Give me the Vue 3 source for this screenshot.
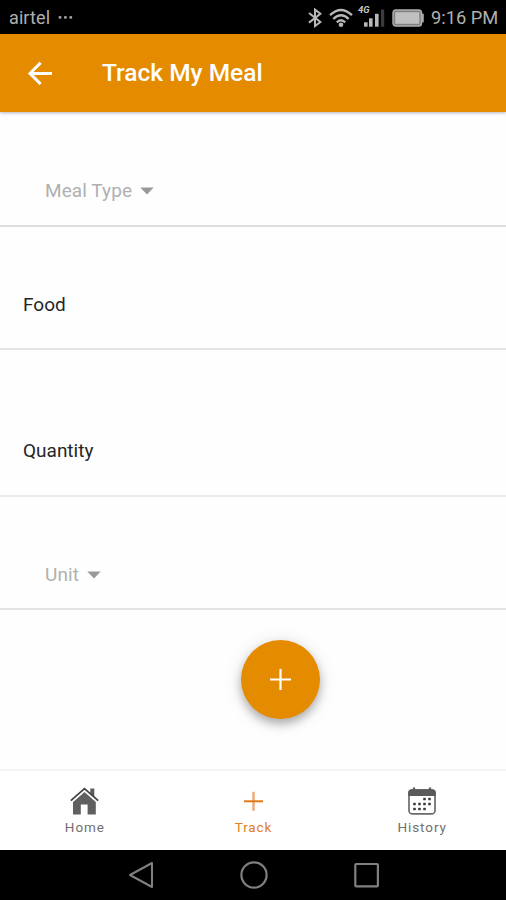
<script setup>
const fields = [
  { label: 'Meal Type', kind: 'select', id: 'meal' },
  { label: 'Food', kind: 'input', id: 'food' },
  { label: 'Quantity', kind: 'input', id: 'quantity' },
  { label: 'Unit', kind: 'select', id: 'unit' },
]
const dots = [
  [16.5, 12], [21.5, 12],
  [6.5, 17], [11.5, 17], [16.5, 17], [21.5, 17],
  [6.5, 22], [11.5, 22], [16.5, 22],
]
</script>

<template>
  <div class="screen">
    <header class="status">
      <span class="carrier">airtel</span>
      <svg class="more" width="16" height="4" viewBox="0 0 16 4" fill="#aaa">
        <rect x="0.7" y="0.2" width="2.6" height="2.4" /><rect x="6.1" y="0.2" width="2.6" height="2.4" /><rect x="11.5" y="0.2" width="2.6" height="2.4" />
      </svg>
      <svg class="bt" width="14" height="20" viewBox="0 0 14 20" fill="none" stroke="#b8b8b8" stroke-width="2">
        <path d="M1 5 12.4 14 7 18V1.6l5.4 4.2L1 14.6" />
      </svg>
      <svg class="wifi" width="24" height="20" viewBox="0 0 24 20" fill="none" stroke="#b8b8b8" stroke-width="2.3">
        <path d="M1 7.2Q12-3.2 23 7.2M4.3 11Q12 3.4 19.7 11M7.8 14.4Q12 10.2 16.2 14.4" />
        <circle cx="12" cy="16.7" r="2.3" fill="#b8b8b8" stroke="none" />
      </svg>
      <div class="signal">
        <span class="net">4G</span>
        <svg width="28" height="22" viewBox="0 0 28 22" fill="#b8b8b8">
          <rect x="7" y="15.3" width="3.6" height="4.4" /><rect x="12" y="11.3" width="3.6" height="8.4" /><rect x="18" y="6.8" width="3.6" height="12.9" /><rect x="24" y="2.6" width="3.2" height="17.1" fill="#3c3c3c" />
        </svg>
      </div>
      <svg class="battery" width="32" height="18" viewBox="0 0 32 18">
        <rect x="1" y="1" width="28.5" height="16" rx="2.8" fill="#808080" stroke="#b0b0b0" stroke-width="1.4" />
        <rect x="3.2" y="3.2" width="24.1" height="11.6" fill="#c0c0c0" />
        <rect x="29.6" y="4.5" width="2.2" height="9" rx="1" fill="#aaa" />
      </svg>
      <span class="time">9:16 PM</span>
    </header>

    <div class="appbar">
      <svg width="26" height="24" viewBox="0 0 26 24" fill="none" stroke="#fff" stroke-width="3">
        <path d="M25 12.4H3.2M13.6 1.8 3 12.4 13.6 23" />
      </svg>
      <h1>Track My Meal</h1>
    </div>

    <main>
      <div v-for="f in fields" :key="f.id" class="field" :class="[f.kind, f.id]">
        <span class="label">{{ f.label }}</span>
        <svg v-if="f.kind === 'select'" width="14" height="8" viewBox="0 0 14 8"><path d="M0.3.4h13.4L7 7.6z" fill="#999" /></svg>
      </div>
      <div class="action">
        <button class="fab" aria-label="Add">
          <svg width="22" height="22" viewBox="0 0 22 22" stroke="#fff" stroke-width="2.2"><path d="M10.5 0v21M0 10.5h21" /></svg>
        </button>
      </div>
    </main>

    <nav class="tabs">
      <div class="tab">
        <svg width="30" height="28" viewBox="0 0 30 28">
          <path d="M21.3 1.4h4v10l-4-4z" fill="#5c5c5c" />
          <path d="M15.5 4.2 4 14.2V27.4h7.8v-9.8h6.8v9.8h8.2V14.2z" fill="#606060" />
          <path d="M2.2 14.9 15.5 3.2 28.8 14.9" fill="none" stroke="#fff" stroke-width="2.6" />
          <path d="M1.8 13.7 15.5 1.6 29.2 13.7" fill="none" stroke="#444" stroke-width="1.8" />
        </svg>
        <span>Home</span>
      </div>
      <div class="tab active">
        <svg width="30" height="28" viewBox="0 0 30 28"><path d="M15.5 4.8v19" stroke="#f0a873" stroke-width="2.4" /><path d="M6 14.3h19" stroke="#e27816" stroke-width="2" /></svg>
        <span>Track</span>
      </div>
      <div class="tab">
        <svg width="28" height="28" viewBox="0 0 28 28">
          <rect x="1" y="3" width="26" height="23.9" rx="3.5" fill="#fff" stroke="#6b6b6b" stroke-width="1.7" />
          <path d="M.2 9V5.5Q.2 2.3 4 2.3h20q3.8 0 3.8 3.2V9z" fill="#5a5a5a" />
          <path d="M6 .6v4M22 .6v4" stroke="#5a5a5a" stroke-width="2.2" />
          <rect v-for="(d, i) in dots" :key="i" :x="d[0] - 1.3" :y="d[1] - 1.3" width="2.6" height="2.6" rx=".6" fill="#3d3d3d" />
        </svg>
        <span>History</span>
      </div>
    </nav>

    <footer class="system">
      <svg width="26" height="28" viewBox="0 0 26 28" fill="none" stroke="#808080" stroke-width="2"><path d="M24 2v24L2 14z" stroke-linejoin="round" /></svg>
      <svg width="28" height="28" viewBox="0 0 28 28" fill="none" stroke="#808080" stroke-width="2.2"><circle cx="14" cy="14" r="12.6" /></svg>
      <svg width="26" height="28" viewBox="0 0 26 28" fill="none" stroke="#808080" stroke-width="2.2"><rect x="1.3" y="3" width="22.6" height="22.4" rx="1" /></svg>
    </footer>
  </div>
</template>

<style>
body { margin: 0; background: #fff; }
</style>

<style scoped>
.screen {
  width: 506px;
  height: 900px;
  display: flex;
  flex-direction: column;
  overflow: hidden;
  background: #fefefe;
  font-family: Roboto, "Liberation Sans", sans-serif;
}
.screen svg { display: block; flex: none; }
.screen span { white-space: nowrap; }
.status {
  height: 34px;
  box-sizing: border-box;
  padding: 1px 8px 0 9px;
  display: flex;
  align-items: center;
  flex: none;
  background: #000;
  color: #b0b0b0;
  font-size: 18px;
}
.carrier { width: 41px; letter-spacing: 0.1px; }
.more { margin-left: 8px; }
.bt { margin-left: auto; }
.wifi { margin-left: 7px; }
.signal { display: grid; margin-left: 4px; }
.signal > * { grid-area: 1 / 1; }
.net { margin-left: 1px; font-size: 9.5px; line-height: 6px; font-weight: 700; font-style: italic; color: #c4c4c4; }
.battery { margin-left: 7px; }
.time { width: 67px; margin-left: 7px; font-size: 18.3px; }
.appbar {
  height: 78px;
  flex: none;
  box-sizing: border-box;
  padding-left: 27px;
  display: flex;
  align-items: center;
  gap: 49px;
  background: #e58b00;
  color: #fff;
  box-shadow: 0 1px 3px rgba(40, 40, 70, 0.35);
  position: relative;
}
h1 { margin: 0; font-size: 24.5px; font-weight: 500; line-height: 30px; }
main { flex: 1; display: flex; flex-direction: column; }
.field {
  box-sizing: border-box;
  display: flex;
  align-items: flex-end;
  border-bottom: 2px solid #e4e4e4;
  padding-left: 23px;
  line-height: 24px;
  font-size: 19px;
  color: #262626;
}
.select { padding-left: 45px; color: #b0b0b0; gap: 8px; }
.select .label { letter-spacing: 0.08px; }
.select svg { margin-bottom: 8px; }
.meal { height: 115px; padding-bottom: 22px; border-color: #dedede; }
.food { height: 123px; padding-bottom: 31px; }
.quantity { height: 147px; padding-bottom: 32px; border-color: #ebebeb; }
.unit { height: 113px; padding-bottom: 21px; }
.action { padding: 30px 0 0 241px; }
.fab {
  width: 79px;
  height: 79px;
  padding: 0;
  border: 0;
  border-radius: 50%;
  display: grid;
  place-items: center;
  background: #e58b00;
  box-shadow: 0 5px 10px rgba(0, 0, 0, 0.28), 0 2px 20px rgba(0, 0, 0, 0.1);
}
.tabs {
  height: 81px;
  flex: none;
  box-sizing: border-box;
  border-top: 2px solid #f4f4f4;
  display: grid;
  grid-template-columns: repeat(3, 1fr);
  background: #fff;
}
.tab {
  display: flex;
  flex-direction: column;
  align-items: center;
  padding-top: 16px;
  color: #707070;
  font-size: 13.5px;
  line-height: 16px;
  letter-spacing: 0.9px;
}
.tab span { margin: 4px 0 0 1px; }
.active { color: #e27d20; }
.system {
  height: 50px;
  flex: none;
  box-sizing: border-box;
  padding-left: 1px;
  display: flex;
  justify-content: center;
  align-items: center;
  gap: 86px;
  background: #000;
}
</style>
